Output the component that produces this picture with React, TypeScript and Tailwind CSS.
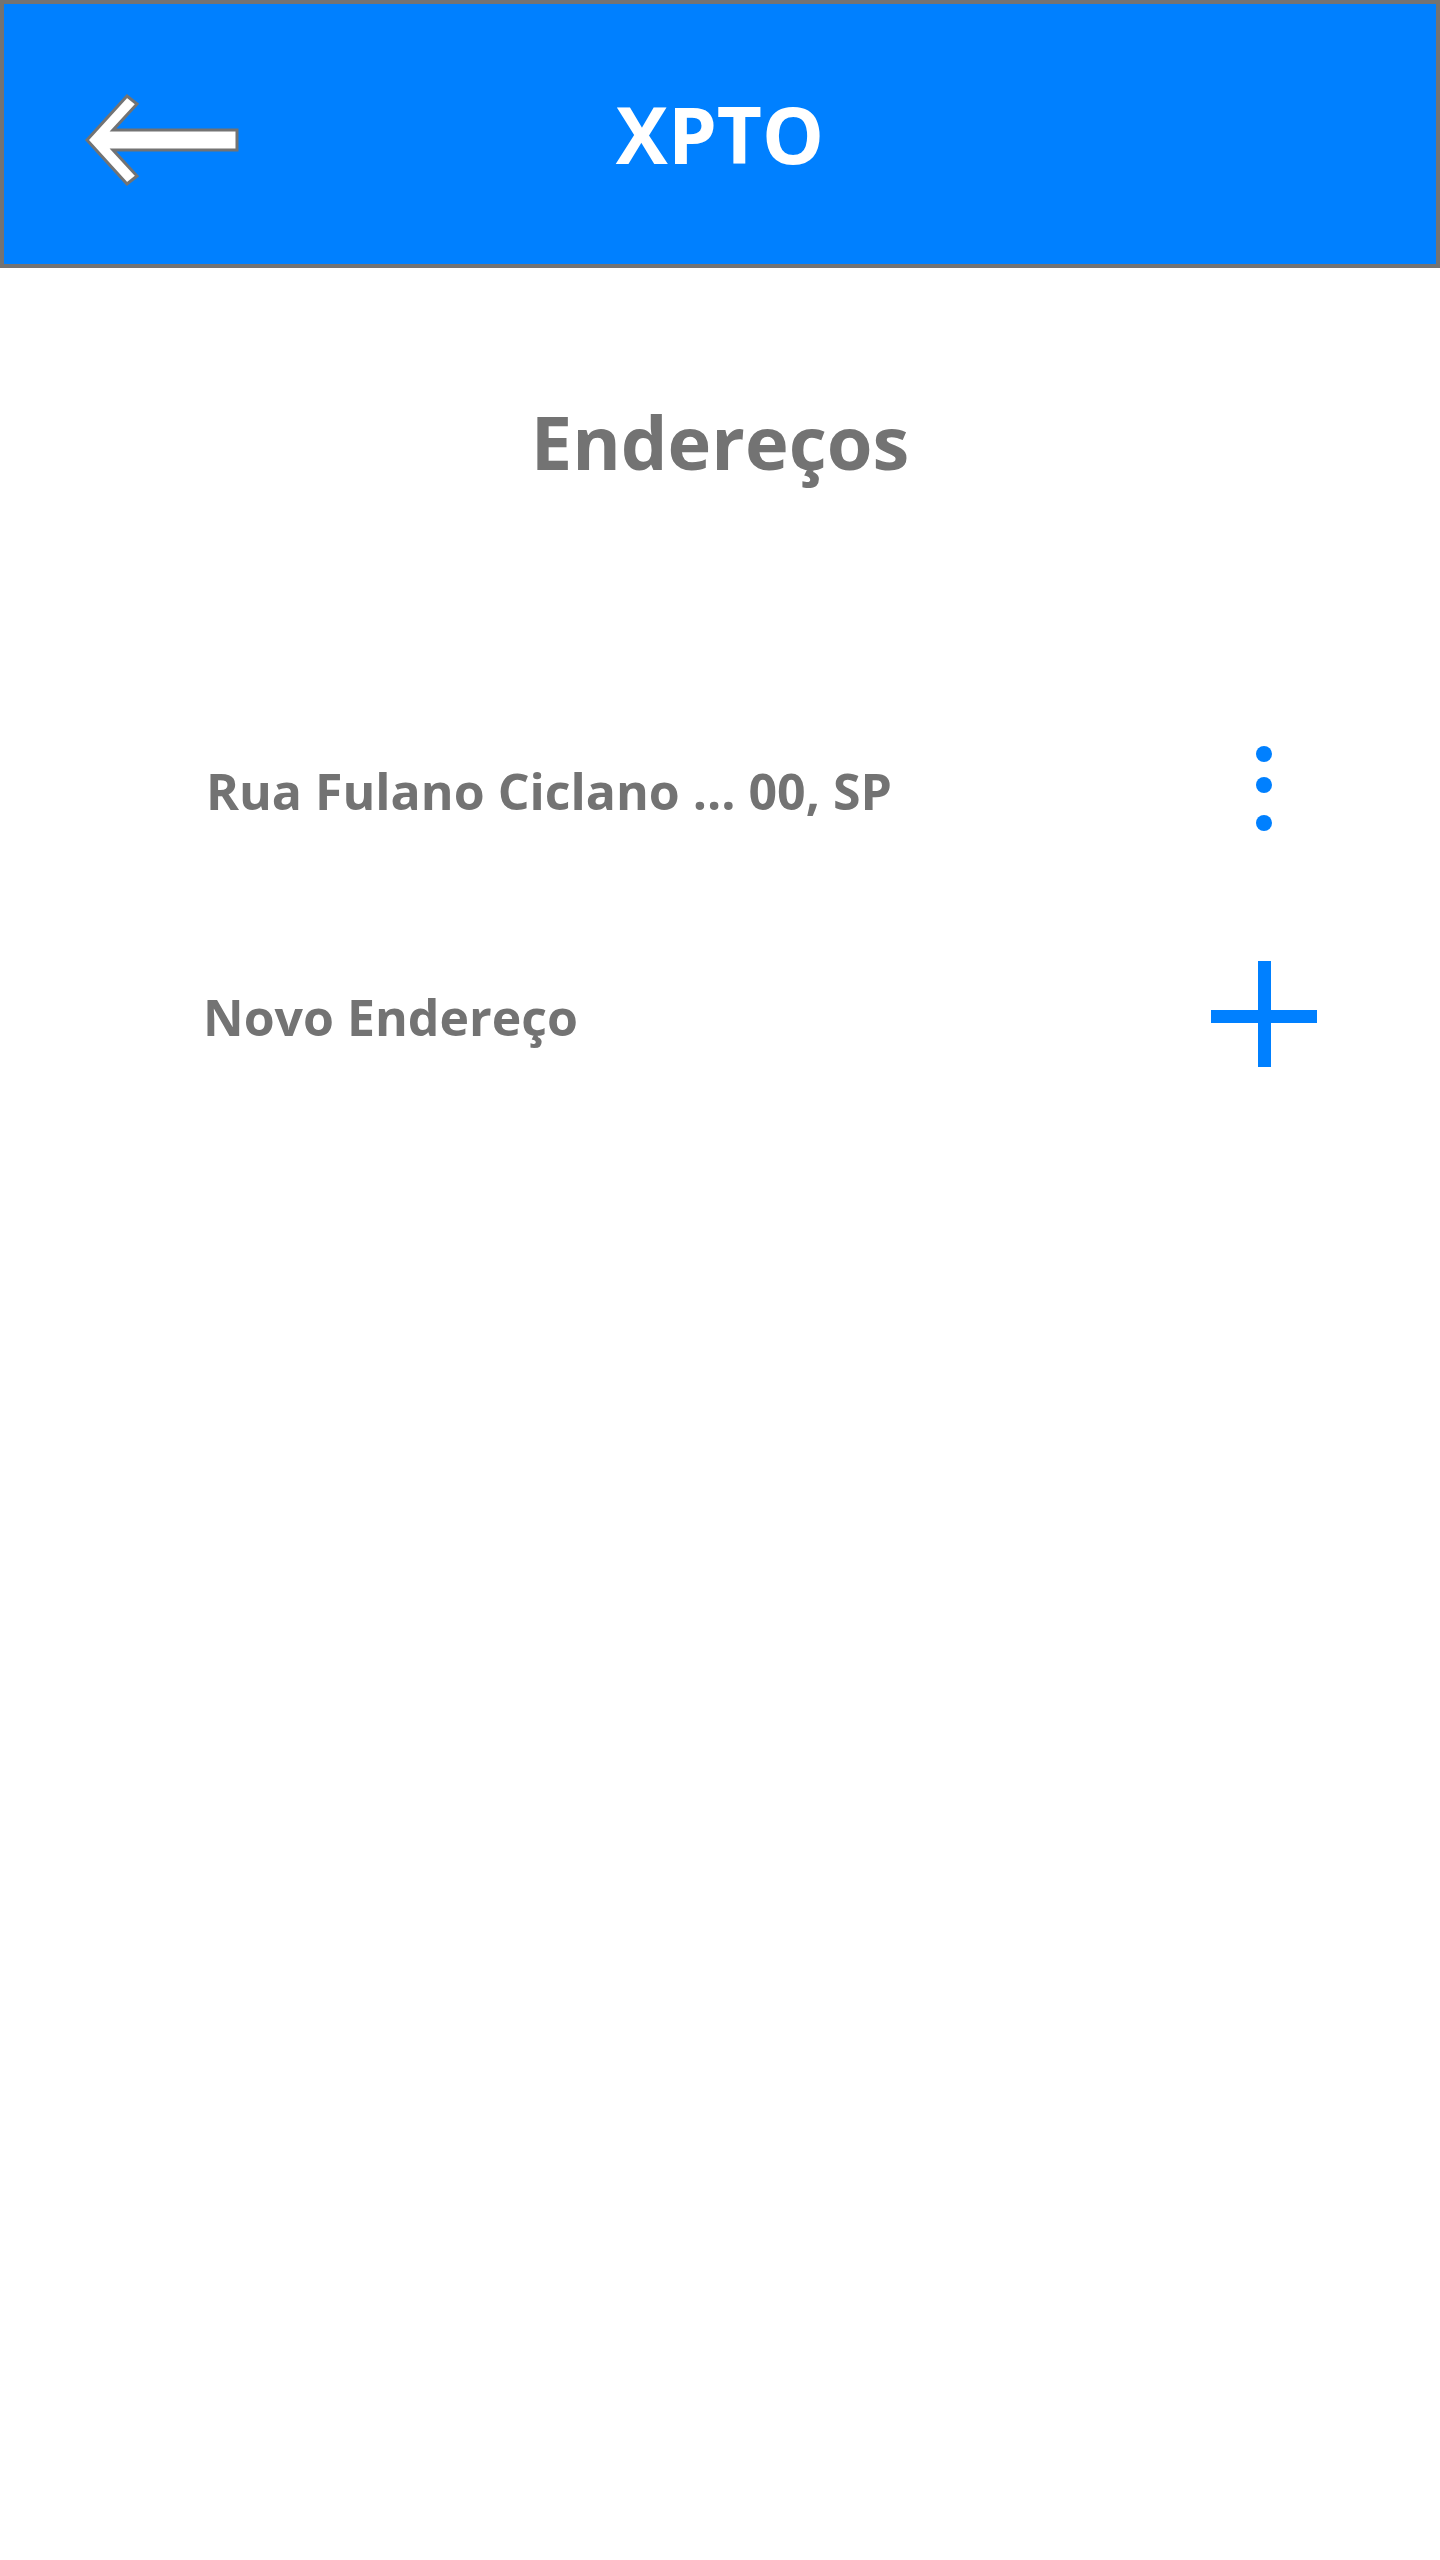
import React from 'react';

function BackArrow() {
  return (
    <svg width="164" height="112" viewBox="80 78 164 112" fill="none">
      <polygon
        points="87,140 127,96 137,104 113,130 237,130 237,150 113,150 137,176 127,184"
        fill="#ffffff"
        stroke="#737373"
        strokeWidth="3"
        strokeLinejoin="miter"
      />
    </svg>
  );
}

function MoreDots() {
  return (
    <svg width="16" height="85" viewBox="0 0 16 85" fill="#0080ff">
      <circle cx="8" cy="8" r="8" />
      <circle cx="8" cy="39" r="8" />
      <circle cx="8" cy="77" r="8" />
    </svg>
  );
}

function PlusIcon() {
  return (
    <svg width="106" height="106" viewBox="0 0 106 106" fill="#0080ff">
      <rect x="47" y="0" width="13" height="106" />
      <rect x="0" y="49" width="106" height="13" />
    </svg>
  );
}

const addresses = ['Rua Fulano Ciclano ... 00, SP'];

export default function App() {
  return (
    <div className="min-h-[2560px] w-[1440px] bg-white" style={{ fontFamily: '"Open Sans", "Noto Sans", sans-serif' }}>
      <header className="grid h-[268px] grid-cols-[1fr_auto_1fr] items-center border-4 border-[#737373] bg-[#0080ff] pl-[76px]">
        <div className="flex items-center">
          <BackArrow />
        </div>
        <h1 className="mr-[76px] text-[78px] font-bold leading-none text-white">XPTO</h1>
        <div />
      </header>

      <h2 className="mt-[137px] text-center text-[74px] font-bold leading-none text-[#737373]">Endereços</h2>

      <div className="mt-[196px]">
        {addresses.map((addr) => (
          <div key={addr} className="flex h-[226px] items-center justify-between pl-[206px] pr-[123px]">
            <span className="mt-[6px] text-[50px] font-bold leading-none text-[#737373]">{addr}</span>
            <div className="flex w-[106px] justify-center">
              <MoreDots />
            </div>
          </div>
        ))}
        <div className="flex h-[226px] items-center justify-between pl-[203px] pr-[123px]">
          <span className="mt-[6px] text-[50px] font-bold leading-none text-[#737373]">Novo Endereço</span>
          <div className="flex w-[106px] justify-center">
            <PlusIcon />
          </div>
        </div>
      </div>
    </div>
  );
}
